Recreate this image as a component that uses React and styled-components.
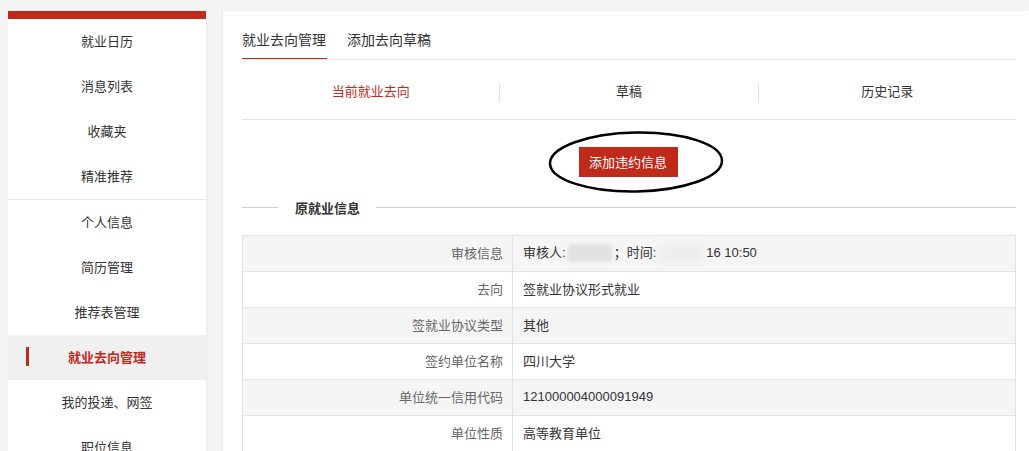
import styled, { createGlobalStyle } from "styled-components";

const RED = "#bf2a1b";

const GlobalStyle = createGlobalStyle`
    body {
        margin: 0;
        background: #f5f5f5;
        font-family: "Liberation Sans", "Noto Sans CJK SC", sans-serif;
        color: #333;
    }
`;

const Page = styled.div`
    display: flex;
    gap: 17px;
    padding: 11px 0 0 8px;
    align-items: flex-start;
`;

const Sidebar = styled.nav`
    width: 198px;
    flex-shrink: 0;
    background: #fff;
    border-top: 8px solid ${RED};
    box-shadow: 1px 0 2px rgba(0, 0, 0, 0.06);
`;

const MenuGroup = styled.ul`
    list-style: none;
    margin: 0;
    padding: 0;
    & + & {
        border-top: 1px solid #e6e6e6;
    }
`;

const MenuItem = styled.li`
    position: relative;
    box-sizing: border-box;
    height: 45px;
    padding-bottom: 3px;
    display: flex;
    align-items: center;
    justify-content: center;
    font-size: 13px;
    color: ${(p) => (p.$active ? RED : "#333")};
    font-weight: ${(p) => (p.$active ? "bold" : "normal")};
    background: ${(p) => (p.$active ? "#f0f0f0" : "#fff")};

    &::before {
        content: "";
        display: ${(p) => (p.$active ? "block" : "none")};
        position: absolute;
        left: 18px;
        top: 12px;
        width: 3px;
        height: 19px;
        background: ${RED};
    }
`;

const Main = styled.main`
    flex: 1;
    background: #fff;
    padding: 0 13px 0 19px;
    min-height: 440px;
    box-shadow: -1px 0 2px rgba(0, 0, 0, 0.05);
`;

const TabBar = styled.div`
    display: flex;
    gap: 20px;
    padding-top: 19px;
    border-bottom: 1px solid #e5e5e5;
`;

const Tab = styled.div`
    font-size: 14px;
    line-height: 20px;
    padding: 0 1px 8px 0;
    color: #333;
    border-bottom: 1px solid ${(p) => (p.$active ? RED : "transparent")};
`;

const SubTabs = styled.div`
    display: flex;
    align-items: center;
    box-sizing: border-box;
    height: 60px;
    padding-top: 6px;
    border-bottom: 1px solid #e5e5e5;
`;

const SubTab = styled.div`
    flex: 1;
    height: 18px;
    line-height: 16px;
    text-align: center;
    font-size: 13px;
    color: ${(p) => (p.$active ? RED : "#333")};
    & + & {
        border-left: 1px solid #e0e0e0;
    }
`;

const ActionRow = styled.div`
    display: flex;
    justify-content: center;
    padding-top: 27px;
`;

const ButtonWrap = styled.div`
    position: relative;
    left: -1px;
`;

const RedButton = styled.button`
    width: 99px;
    height: 30px;
    border: none;
    background: ${RED};
    color: #fff;
    font-family: inherit;
    font-size: 13px;
    padding: 0 0 2px;
    cursor: pointer;
`;

const Circle = styled.svg`
    position: absolute;
    left: -31px;
    top: -16px;
    width: 176px;
    height: 64px;
    pointer-events: none;
    overflow: visible;
`;

const SectionTitle = styled.div`
    display: flex;
    align-items: center;
    margin-top: 20px;
    height: 20px;
    font-size: 13px;
    font-weight: bold;

    &::before,
    &::after {
        content: "";
        height: 1px;
        background: #d0d0d0;
    }
    &::before {
        width: 36px;
        margin-right: 17px;
    }
    &::after {
        flex: 1;
        margin-left: 16px;
    }
`;

const InfoTable = styled.table`
    width: 100%;
    margin-top: 18px;
    border-collapse: collapse;
    font-size: 13px;
`;

const Row = styled.tr`
    height: 36px;
    background: ${(p) => (p.$odd ? "#f5f5f5" : "#fff")};
`;

const Label = styled.td`
    width: 260px;
    padding: 0 9px 3px 0;
    text-align: right;
    color: #666;
    border: 1px solid #e3e3e3;
`;

const Value = styled.td`
    padding: 0 10px 3px;
    color: #333;
    border: 1px solid #e3e3e3;
`;

const Blurred = styled.span`
    display: inline-block;
    vertical-align: middle;
    width: ${(p) => p.$w}px;
    height: 18px;
    margin: 0 ${(p) => p.$gap}px;
    border-radius: 4px;
    background: ${(p) => p.$bg};
    filter: blur(${(p) => p.$blur}px);
`;

const menuTop = ["就业日历", "消息列表", "收藏夹", "精准推荐"];
const menuBottom = ["个人信息", "简历管理", "推荐表管理", "就业去向管理", "我的投递、网签", "职位信息"];

const rows = [
    ["审核信息", null],
    ["去向", "签就业协议形式就业"],
    ["签就业协议类型", "其他"],
    ["签约单位名称", "四川大学"],
    ["单位统一信用代码", "121000004000091949"],
    ["单位性质", "高等教育单位"],
];

export default function App() {
    return (
        <>
            <GlobalStyle />
            <Page>
                <Sidebar>
                    <MenuGroup>
                        {menuTop.map((m) => (
                            <MenuItem key={m}>{m}</MenuItem>
                        ))}
                    </MenuGroup>
                    <MenuGroup>
                        {menuBottom.map((m) => (
                            <MenuItem key={m} $active={m === "就业去向管理"}>
                                {m}
                            </MenuItem>
                        ))}
                    </MenuGroup>
                </Sidebar>
                <Main>
                    <TabBar>
                        <Tab $active>就业去向管理</Tab>
                        <Tab>添加去向草稿</Tab>
                    </TabBar>
                    <SubTabs>
                        <SubTab $active>当前就业去向</SubTab>
                        <SubTab>草稿</SubTab>
                        <SubTab>历史记录</SubTab>
                    </SubTabs>
                    <ActionRow>
                        <ButtonWrap>
                            <RedButton>添加违约信息</RedButton>
                            <Circle viewBox="0 0 176 64">
                                <ellipse cx="88" cy="31" rx="86" ry="29.5" fill="none" stroke="#000" strokeWidth="2.5" transform="rotate(-1 88 31)" />
                            </Circle>
                        </ButtonWrap>
                    </ActionRow>
                    <SectionTitle>原就业信息</SectionTitle>
                    <InfoTable>
                        <tbody>
                            {rows.map(([label, value], i) => (
                                <Row key={label} $odd={i % 2 === 0}>
                                    <Label>{label}</Label>
                                    <Value>
                                        {value ?? (
                                            <>
                                                审核人:<Blurred $w={44} $gap={2} $bg="#e2e2e2" $blur={1.5} />；时间:
                                                <Blurred $w={42} $gap={4} $bg="#eeeeee" $blur={3} />16 10:50
                                            </>
                                        )}
                                    </Value>
                                </Row>
                            ))}
                        </tbody>
                    </InfoTable>
                </Main>
            </Page>
        </>
    );
}
